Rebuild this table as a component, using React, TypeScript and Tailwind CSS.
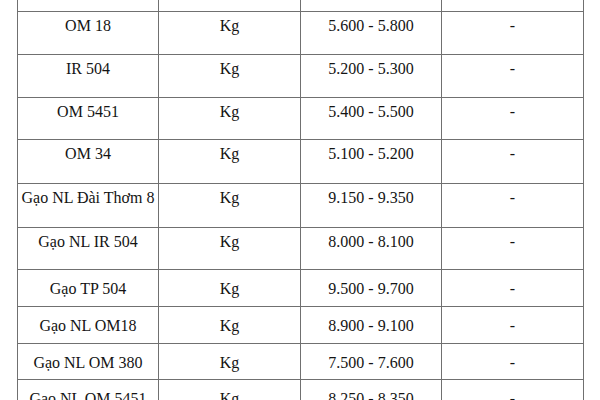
const rows: { name: string; unit: string; price: string; change: string; h: string; pt: string }[] = [
  { name: "", unit: "", price: "", change: "", h: "h-[43px]", pt: "pt-[5px]" },
  { name: "OM 18", unit: "Kg", price: "5.600 - 5.800", change: "-", h: "h-[43px]", pt: "pt-[5px]" },
  { name: "IR 504", unit: "Kg", price: "5.200 - 5.300", change: "-", h: "h-[43px]", pt: "pt-[5px]" },
  { name: "OM 5451", unit: "Kg", price: "5.400 - 5.500", change: "-", h: "h-[42px]", pt: "pt-[5px]" },
  { name: "OM 34", unit: "Kg", price: "5.100 - 5.200", change: "-", h: "h-[44px]", pt: "pt-[5px]" },
  { name: "Gạo NL Đài Thơm 8", unit: "Kg", price: "9.150 - 9.350", change: "-", h: "h-[44px]", pt: "pt-[5px]" },
  { name: "Gạo NL IR 504", unit: "Kg", price: "8.000 - 8.100", change: "-", h: "h-[42px]", pt: "pt-[5px]" },
  { name: "Gạo TP 504", unit: "Kg", price: "9.500 - 9.700", change: "-", h: "h-[37px]", pt: "pt-[10px]" },
  { name: "Gạo NL OM18", unit: "Kg", price: "8.900 - 9.100", change: "-", h: "h-[37px]", pt: "pt-[10px]" },
  { name: "Gạo NL OM 380", unit: "Kg", price: "7.500 - 7.600", change: "-", h: "h-[36px]", pt: "pt-[10px]" },
  { name: "Gạo NL OM 5451", unit: "Kg", price: "8.250 - 8.350", change: "-", h: "h-[37px]", pt: "pt-[10px]" },
];

const cell = "border border-[#707070] text-center align-top p-0";

export default function App() {
  return (
    <div className="w-[600px] h-[400px] overflow-hidden bg-white">
      <div className="pl-[17px] -mt-[32px]">
        <table
          className="border-collapse table-fixed text-[16px] leading-[18px] text-[#141414]"
          style={{ fontFamily: '"Liberation Serif", "Times New Roman", serif' }}
        >
          <colgroup>
            <col className="w-[141px]" />
            <col className="w-[142px]" />
            <col className="w-[141px]" />
            <col className="w-[142px]" />
          </colgroup>
          <tbody>
            {rows.map((r, i) => (
              <tr key={i} className={r.h}>
                <td className={`${cell} ${r.pt}`}>{r.name}</td>
                <td className={`${cell} ${r.pt}`}>{r.unit}</td>
                <td className={`${cell} ${r.pt}`}>{r.price}</td>
                <td className={`${cell} ${r.pt}`}>{r.change}</td>
              </tr>
            ))}
          </tbody>
        </table>
      </div>
    </div>
  );
}
